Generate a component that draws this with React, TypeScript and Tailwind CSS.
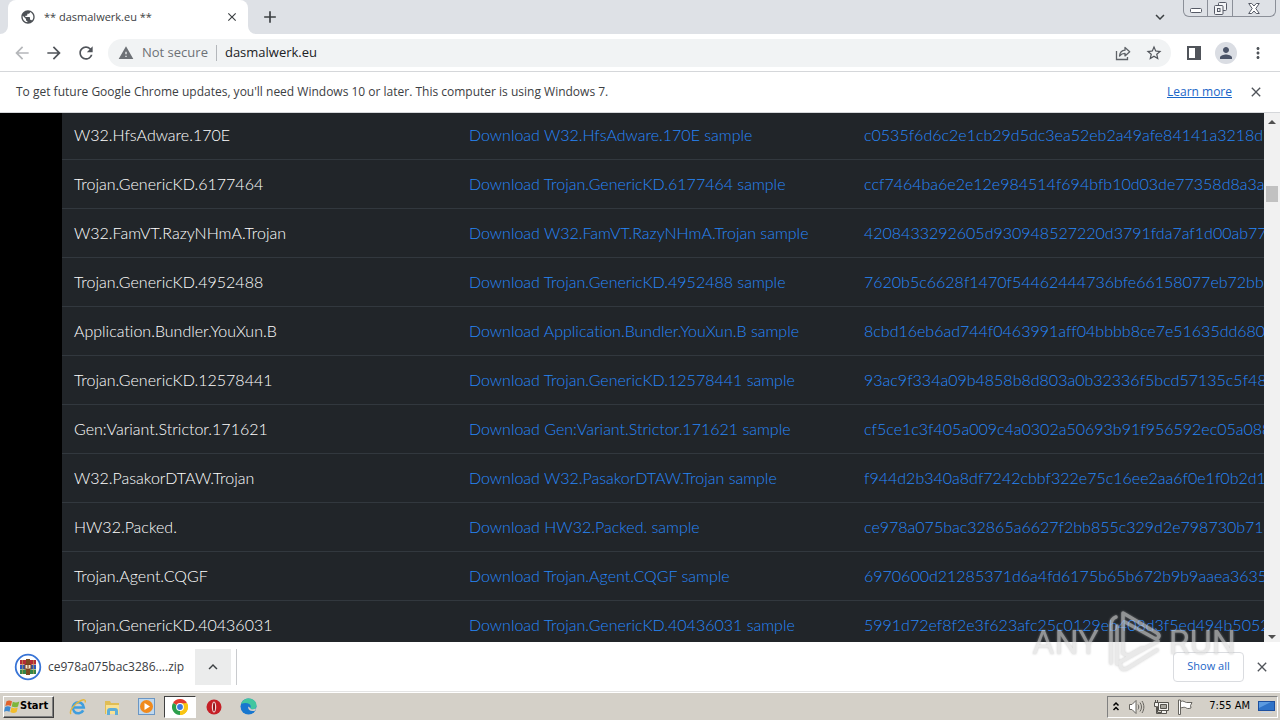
import { useState } from "react";
import {
  MdArrowBack,
  MdArrowForward,
  MdClose,
  MdMoreVert,
  MdPerson,
  MdPublic,
  MdRefresh,
  MdStarBorder,
  MdWarning,
  MdAdd,
  MdKeyboardArrowDown,
  MdKeyboardArrowUp,
} from "react-icons/md";

const samples = [
  { name: "W32.HfsAdware.170E", hash: "c0535f6d6c2e1cb29d5dc3ea52eb2a49afe84141a3218d7" },
  { name: "Trojan.GenericKD.6177464", hash: "ccf7464ba6e2e12e984514f694bfb10d03de77358d8a3afc" },
  { name: "W32.FamVT.RazyNHmA.Trojan", hash: "4208433292605d930948527220d3791fda7af1d00ab776" },
  { name: "Trojan.GenericKD.4952488", hash: "7620b5c6628f1470f54462444736bfe66158077eb72bb28" },
  { name: "Application.Bundler.YouXun.B", hash: "8cbd16eb6ad744f0463991aff04bbbb8ce7e51635dd6802" },
  { name: "Trojan.GenericKD.12578441", hash: "93ac9f334a09b4858b8d803a0b32336f5bcd57135c5f483" },
  { name: "Gen:Variant.Strictor.171621", hash: "cf5ce1c3f405a009c4a0302a50693b91f956592ec05a0880" },
  { name: "W32.PasakorDTAW.Trojan", hash: "f944d2b340a8df7242cbbf322e75c16ee2aa6f0e1f0b2d10" },
  { name: "HW32.Packed.", hash: "ce978a075bac32865a6627f2bb855c329d2e798730b718" },
  { name: "Trojan.Agent.CQGF", hash: "6970600d21285371d6a4fd6175b65b672b9b9aaea36353" },
  { name: "Trojan.GenericKD.40436031", hash: "5991d72ef8f2e3f623afc25c0129eb408d3f5ed494b5052a" },
];

function ShareIcon() {
  return (
    <svg width="16" height="16" viewBox="0 0 16 16" fill="none" stroke="#5f6368" strokeWidth="1.3">
      <path d="M1.5 6v8.5h11V12" />
      <path d="M4.5 11c.4-3.6 2.6-5.6 5.5-5.8V2.5l4.7 4.2-4.7 4.2V8.3c-2.4 0-4 .8-5.5 2.7z" strokeLinejoin="round" />
    </svg>
  );
}

function SidePanelIcon() {
  return (
    <svg width="14" height="14" viewBox="0 0 14 14">
      <path fill="#50545a" fillRule="evenodd" d="M0 0h14v14H0zM2 2v10h6V2z" />
    </svg>
  );
}

function WindowControls() {
  return (
    <div className="mr-1 flex h-[17px] self-start overflow-hidden rounded-b-md border border-t-0 border-[#8b8f98] text-[#565a66]">
      <button aria-label="Minimize" className="flex w-6 items-center justify-center border-r border-[#8b8f98]">
        <svg width="12" height="5" viewBox="0 0 12 5" className="mt-1">
          <rect x=".5" y=".5" width="11" height="4" rx="1" fill="#fff" stroke="currentColor" />
        </svg>
      </button>
      <button aria-label="Restore" className="flex w-[25px] items-center justify-center border-r border-[#8b8f98]">
        <svg width="13" height="13" viewBox="0 0 13 13" fill="#f4f5f7" stroke="currentColor">
          <rect x="4.5" y=".5" width="8" height="8" rx="1" />
          <rect x=".5" y="3.5" width="8.5" height="9" rx="1" />
          <rect x="3.5" y="6.5" width="2.5" height="3" />
        </svg>
      </button>
      <button aria-label="Close window" className="flex w-[42px] items-center justify-center">
        <svg width="12" height="11" viewBox="0 0 12 11" fill="#fff" stroke="currentColor">
          <path d="M.7.5h3L6 3 8.3.5h3L7.8 5.5l3.5 5h-3L6 8l-2.3 2.5h-3l3.500-5z" strokeLinejoin="round" />
        </svg>
      </button>
    </div>
  );
}

function TabStrip() {
  return (
    <div className="flex h-[34px] shrink-0 items-center bg-[#dee1e6] pl-2 text-[#3c4043]">
      <div className="relative flex h-full w-60 items-center rounded-t-lg bg-white pl-3 pr-2">
        <svg width="8" height="8" className="absolute bottom-0 -left-2" fill="#fff">
          <path d="M8 0v8H0a8 8 0 0 0 8-8z" />
        </svg>
        <svg width="8" height="8" className="absolute -right-2 bottom-0" fill="#fff">
          <path d="M0 0v8h8a8 8 0 0 1-8-8z" />
        </svg>
        <MdPublic size={16} className="text-[#4d5156]" />
        <span className="ml-2 flex-1 text-[11px]">** dasmalwerk.eu **</span>
        <button aria-label="Close tab" className="flex w-4 justify-center">
          <MdClose size={14} />
        </button>
      </div>
      <button aria-label="New tab" className="ml-3">
        <MdAdd size={20} />
      </button>
      <div className="flex-1" />
      <button aria-label="Search tabs" className="mr-3.5">
        <MdKeyboardArrowDown size={18} />
      </button>
      <WindowControls />
    </div>
  );
}

function Toolbar() {
  return (
    <div className="flex h-[38px] shrink-0 items-center border-b border-[#d5d7da] pr-[13px] pl-3 text-[#50545a]">
      <button aria-label="Back" className="text-[#b5b7ba]">
        <MdArrowBack size={20} />
      </button>
      <button aria-label="Forward" className="ml-3">
        <MdArrowForward size={20} />
      </button>
      <button aria-label="Reload" className="ml-3">
        <MdRefresh size={20} />
      </button>
      <div className="ml-3 flex h-7 flex-1 items-center rounded-full bg-[#f1f3f4] pr-2 pl-2.5">
        <button className="flex items-center gap-2 text-[13px] text-[#6d7176]">
          <MdWarning size={16} />
          Not secure
        </button>
        <span className="mx-2 h-4 w-px bg-[#b4b7bb]" />
        <input
          aria-label="Address"
          defaultValue="dasmalwerk.eu"
          className="min-w-0 flex-1 bg-transparent text-[13px] text-[#202124] outline-none"
        />
        <button aria-label="Share this page" className="mr-3.5">
          <ShareIcon />
        </button>
        <button aria-label="Bookmark">
          <MdStarBorder size={18} />
        </button>
      </div>
      <button aria-label="Side panel" className="ml-4">
        <SidePanelIcon />
      </button>
      <button
        aria-label="Profile"
        className="ml-3.5 flex size-[22px] items-center justify-center rounded-full bg-[#dadde3] text-[#4b5468]"
      >
        <MdPerson size={18} />
      </button>
      <button aria-label="Menu" className="ml-3">
        <MdMoreVert size={18} />
      </button>
    </div>
  );
}

function InfoBar() {
  return (
    <div className="flex h-[41px] shrink-0 items-center border-b border-[#d5d7da] pr-4 pl-4 text-[12px] text-[#3c4043]">
      <p className="flex-1">
        To get future Google Chrome updates, you'll need Windows 10 or later. This computer is using Windows 7.
      </p>
      <a href="#learn" className="text-[#1a66c8] underline">
        Learn more
      </a>
      <button aria-label="Dismiss" className="ml-4 text-[#50545a]">
        <MdClose size={16} />
      </button>
    </div>
  );
}

function SampleTable() {
  return (
    <div className="min-w-0 flex-1 overflow-hidden bg-[#212529]">
      <table className="-mt-0.5 w-full table-fixed border-separate border-spacing-0 text-left font-[Lato,sans-serif] text-base font-light [font-variant-ligatures:none]">
        <colgroup>
          <col className="w-[395px]" />
          <col className="w-[395px]" />
          <col />
        </colgroup>
        <tbody>
          {samples.map((sample) => (
            <tr key={sample.name} className="h-[49px] whitespace-nowrap text-[#2787fa]">
              <td className="border-b border-[#32383e] px-3 text-white">{sample.name}</td>
              <td className="border-b border-[#32383e] px-3">
                <a href="#download">Download {sample.name} sample</a>
              </td>
              <td className="border-b border-[#32383e] px-3">
                <a href="#hash">{sample.hash}</a>
              </td>
            </tr>
          ))}
        </tbody>
      </table>
    </div>
  );
}

function Scrollbar() {
  return (
    <div className="flex w-4 shrink-0 flex-col items-center bg-[#f1f1f1]">
      <svg width="16" height="17" fill="#505050">
        <path d="M4 11h8L8 7z" />
      </svg>
      <div className="mt-14 h-4 w-3 bg-[#c1c1c1]" />
      <div className="flex-1" />
      <svg width="16" height="13" fill="#505050">
        <path d="M4 6h8L8 10z" />
      </svg>
    </div>
  );
}

function Watermark() {
  return (
    <div className="pointer-events-none absolute right-11 bottom-[46px] flex items-center gap-1 font-[Roboto,sans-serif] text-[34px] leading-[64px] text-[#dcdcdc] opacity-60 drop-shadow-[0_0_1px_#aaa]">
      <span>ANY</span>
      <svg width="62" height="64" viewBox="0 0 62 64" fill="none" stroke="currentColor" strokeWidth="3.5" strokeLinecap="round" strokeLinejoin="round">
        <path d="M8 53V15c0-4 2-7 5-8" />
        <path d="M14 54V16" />
        <path d="M20 43V3l34 20c4 3 1 7-3 5L22 12" />
        <path d="M20 43l5 3 14-8M17 52l38-21M17 52c0 7 3 9 8 6l29-18" />
      </svg>
      <span>RUN</span>
    </div>
  );
}

function ArchiveIcon() {
  return (
    <svg width="28" height="28" viewBox="0 0 28 28">
      <circle cx="14" cy="14" r="12.3" fill="#fff" stroke="#3874d6" strokeWidth="1.8" />
      <path fill="#b42c36" d="M6 7h16v4.5H6z" />
      <path fill="#2e58b8" d="M6 12h16v4H6z" />
      <path fill="#35854a" d="M6 16.5h16V21H6z" />
      <path fill="#7d4a21" d="M12 6h4v16h-4z" />
      <path fill="none" stroke="#c9a94a" strokeWidth=".6" d="M8.5 7v14M19.5 7v14" />
      <rect x="11" y="11.5" width="6" height="4.5" fill="#f4e7ca" stroke="#7a3d1c" />
      <path fill="#7a3d1c" d="M13.5 12h1v3h-1z" />
    </svg>
  );
}

function DownloadShelf() {
  return (
    <div className="flex h-[50px] shrink-0 items-center border-b border-[#e4e4e4] bg-white pr-2.5 pl-3.5 text-[12px] text-[#3c4043]">
      <button className="flex items-center gap-1.5">
        <ArchiveIcon />
        ce978a075bac3286....zip
      </button>
      <button aria-label="Download options" className="ml-[11px] flex size-9 items-center justify-center bg-[#ebecec]">
        <MdKeyboardArrowUp size={18} />
      </button>
      <span className="ml-[5px] h-9 w-px bg-[#c9cbce]" />
      <div className="flex-1" />
      <button className="h-[30px] w-[71px] rounded border border-[#dadce0] text-[11px] text-[#1a66c8]">Show all</button>
      <button aria-label="Close downloads" className="ml-2.5 text-[#50545a]">
        <MdClose size={16} />
      </button>
    </div>
  );
}

function WindowsFlag() {
  return (
    <svg width="16" height="16" viewBox="0 0 16 16">
      <path fill="#e2632b" d="M2.5 2.3C4.5 1 6 1.2 8 2.3L6.9 7C5 6 3.3 6 1.3 7z" />
      <path fill="#7db63a" d="M8.8 2.7c2 1 4 1 6.5-.2L14 7.4c-2.2 1.2-4.2 1-6.300 0z" />
      <path fill="#3f8ad0" d="M1.100 7.900C3 6.900 4.700 7 6.700 8l-1.200 4.800c-2-1-3.700-1-5.500 0z" />
      <path fill="#f2bd2c" d="M7.500 8.300c2.200 1.100 4 1.200 6.300.1l-1.200 4.700c-2.200 1.200-4.200 1.100-6.300 0z" />
    </svg>
  );
}

function ExplorerIcon() {
  return (
    <svg width="18" height="18" viewBox="0 0 18 18" fill="none">
      <path stroke="#3f9ede" strokeWidth="2.6" d="M14.2 12.3A5.500 5.500 0 1 1 14.800 9.500H5" />
      <path stroke="#e5b73c" strokeWidth="1.4" d="M2 16C-.5 13 6 5 12 2.500c3.500-1.500 5-.5 4 2" />
    </svg>
  );
}

function FolderIcon() {
  return (
    <svg width="18" height="18" viewBox="0 0 18 18">
      <path fill="#e0bd55" d="M2 3h5l1 2h8v11H2z" />
      <path fill="#f8e193" d="M3 7h13v9H3z" />
      <path fill="#5eadd8" d="M4 17v-4c0-2 1-3 3-3h5c2 0 3 1 3 3v4h-3v-4H7v4z" />
    </svg>
  );
}

function MediaPlayerIcon() {
  return (
    <svg width="17" height="17" viewBox="0 0 17 17">
      <rect x=".5" y=".5" width="16" height="16" fill="#bfd8ee" stroke="#6a96c4" />
      <circle cx="8.5" cy="8.5" r="6.500" fill="#f08a1d" />
      <path fill="#fff" d="M6.500 5v7l5.500-3.500z" />
    </svg>
  );
}

function ChromeIcon() {
  return (
    <svg width="16" height="16" viewBox="0 0 16 16">
      <path fill="#e33b2e" d="M8 8 1.070 4a8 8 0 0 1 13.860 0z" />
      <path fill="#f9c513" d="M8 8l6.930-4A8 8 0 0 1 8 16z" />
      <path fill="#2c9f4b" d="M8 8v8A8 8 0 0 1 1.070 4z" />
      <path fill="#f9c513" d="M8 4.300h7.100A8 8 0 0 1 8 16l3.300-6z" />
      <circle cx="8" cy="8" r="3.900" fill="#fff" />
      <circle cx="8" cy="8" r="2.900" fill="#3978e0" />
    </svg>
  );
}

function OperaIcon() {
  return (
    <svg width="16" height="16" viewBox="0 0 16 16">
      <circle cx="8" cy="8" r="7.5" fill="#c51f26" />
      <ellipse cx="8" cy="8" rx="2.2" ry="5.5" fill="#f4dcdc" />
      <ellipse cx="8" cy="8" rx="1" ry="4.5" fill="#8e1118" />
    </svg>
  );
}

function EdgeIcon() {
  return (
    <svg width="17" height="17" viewBox="0 0 17 17">
      <circle cx="8.5" cy="8.5" r="8" fill="#1877cf" />
      <path fill="#42c6a0" d="M1 6C2.500 2 5.500.500 8.500.500c5 0 8 3.500 8 7 0 2.500-2 3.800-4 3.800-2 0-2.500-1-2-1.800C12 6.500 7 3.500 1 6z" />
      <path fill="#d4d0c8" d="M8.300 8.500c-.8 3 2 5.500 6.700 4.200l2-3.200c-2 2.300-6.500 2.500-6.700.5z" />
    </svg>
  );
}

function TrayIcons() {
  return (
    <>
      <svg width="8" height="11" viewBox="0 0 8 11" fill="none" stroke="#000" strokeWidth="1.5">
        <path d="M1.5 4.500 4 2l2.500 2.500M1.500 9 4 6.500 6.500 9" />
      </svg>
      <svg width="17" height="16" viewBox="0 0 17 16" fill="#fff" stroke="#66645f">
        <path d="M1.5 5.500H4l4-4v13l-4-4H1.500z" />
        <path fill="none" d="M10 5.500c1 1.500 1 3.500 0 5M12 3.500c2 3 2 6 0 9M14 2c2.500 4 2.500 8 0 12" />
      </svg>
      <svg width="16" height="16" viewBox="0 0 16 16" fill="#f3f2ef" stroke="#55534e">
        <path d="M5.500 3.500h10v8h-10zM8.500 11.500v3h5v-3" />
        <path fill="#a8a69f" d="M7.500 5.500h6v4h-6z" />
        <path d="M1.500 3.500h4v4h-1v6h4v1h-5v-7h-2zM2.500 1v2.500M4.500 1v2.500" />
      </svg>
      <svg width="16" height="16" viewBox="0 0 16 16" fill="#fff" stroke="#66645f">
        <path d="M1.500 1v14.500h2V1z" />
        <path d="M3.500 2.500c3-1.500 4.500 1 6 1h5.500l-1.500 3 .5 2.500c-3 1-4 .5-5.500-.5-1.500-.5-3 0-5 .5z" />
      </svg>
    </>
  );
}

const launchers = [
  { label: "Internet Explorer", icon: <ExplorerIcon /> },
  { label: "Windows Explorer", icon: <FolderIcon /> },
  { label: "Media Player", icon: <MediaPlayerIcon /> },
  { label: "Chrome", icon: <ChromeIcon /> },
  { label: "Opera", icon: <OperaIcon /> },
  { label: "Edge", icon: <EdgeIcon /> },
];

function Taskbar() {
  const [active, setActive] = useState("Chrome");

  return (
    <div className="flex h-7 shrink-0 items-center border-t border-white bg-[#d4d0c8] pr-0.5 pl-[3px] text-black">
      <button className="mr-2 flex h-[22px] w-[51px] items-center border border-t-white border-r-[#404040] border-b-[#404040] border-l-white font-['DejaVu_Sans_Condensed','DejaVu_Sans',sans-serif] text-[11px] font-bold shadow-[inset_-1px_-1px_#808080]">
        <WindowsFlag />
        Start
      </button>
      <div className="flex gap-0.5">
        {launchers.map((app) => (
          <button
            key={app.label}
            aria-label={app.label}
            onClick={() => setActive(app.label)}
            className={
              active === app.label
                ? "flex h-[22px] w-8 items-center justify-center border border-t-[#404040] border-r-white border-b-white border-l-[#404040] bg-white"
                : "flex h-[22px] w-8 items-center justify-center"
            }
          >
            {app.icon}
          </button>
        ))}
      </div>
      <div className="flex-1" />
      <div className="flex h-[22px] items-center gap-2 border border-t-[#808080] border-r-white border-b-white border-l-[#808080] pr-0.5 pl-1">
        <TrayIcons />
        <span className="ml-2 font-['DejaVu_Sans_Condensed','Open_Sans',sans-serif] text-[11px]">7:55 AM</span>
        <button aria-label="Show desktop">
          <svg width="17" height="14" viewBox="0 0 17 14">
            <path fill="#1d4f9e" d="M0 1h17v10H0z" />
            <path fill="#2f73c8" d="M1 2h15v8H1z" />
            <path fill="#5c9be0" d="M1 2h12L1 8z" />
            <path fill="#c8d4e4" d="M3 12h11v1H3z" />
          </svg>
        </button>
      </div>
    </div>
  );
}

export default function App() {
  return (
    <div className="relative flex h-screen flex-col overflow-hidden bg-white font-['Open_Sans',sans-serif]">
      <TabStrip />
      <Toolbar />
      <InfoBar />
      <main className="flex min-h-0 flex-1 bg-black pl-[62px]">
        <SampleTable />
        <Scrollbar />
      </main>
      <DownloadShelf />
      <Taskbar />
      <Watermark />
    </div>
  );
}
